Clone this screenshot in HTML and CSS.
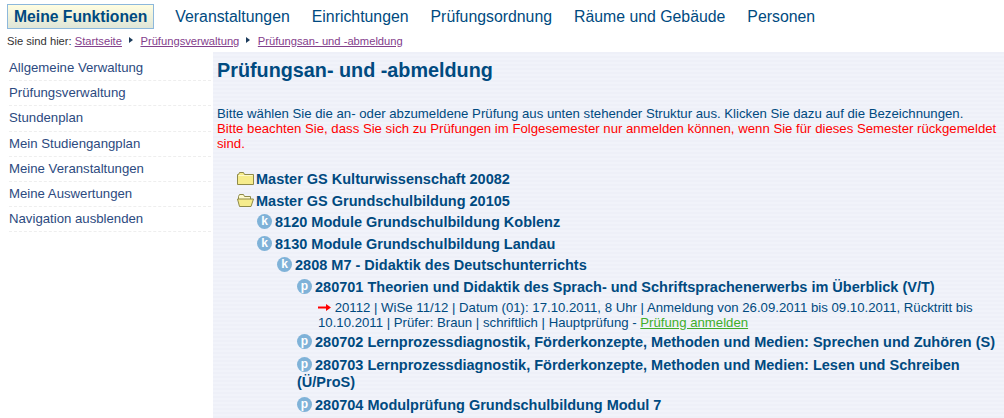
FILE: index.html
```html
<!DOCTYPE html>
<html lang="de">
  <head>
    <meta charset="UTF-8" />
    <title>Prüfungsan- und -abmeldung</title>
    <link rel="stylesheet" href="styles.css">
  </head>
  <body>
    <div class="topnav">
      <a class="topnav-active">Meine Funktionen</a>
      <a>Veranstaltungen</a>
      <a>Einrichtungen</a>
      <a>Prüfungsordnung</a>
      <a>Räume und Gebäude</a>
      <a>Personen</a>
    </div>
    <div class="crumbs">
      <span>Sie sind hier:</span>
      <a>Startseite</a>
      <i class="crumb-arrow"></i>
      <a>Prüfungsverwaltung</a>
      <i class="crumb-arrow"></i>
      <a>Prüfungsan- und -abmeldung</a>
    </div>
    <div class="page">
      <ul class="sidebar">
        <li>Allgemeine Verwaltung</li>
        <li>Prüfungsverwaltung</li>
        <li>Stundenplan</li>
        <li>Mein Studiengangplan</li>
        <li>Meine Veranstaltungen</li>
        <li>Meine Auswertungen</li>
        <li>Navigation ausblenden</li>
      </ul>
      <div class="content">
        <h1>Prüfungsan- und -abmeldung</h1>
        <p class="intro">Bitte wählen Sie die an- oder abzumeldene Prüfung aus unten stehender Struktur aus. Klicken Sie dazu auf die Bezeichnungen.<br>
        <span class="warn">Bitte beachten Sie, dass Sie sich zu Prüfungen im Folgesemester nur anmelden können, wenn Sie für dieses Semester rückgemeldet sind.</span></p>

        <div class="tree">
          <div class="node">
            <svg class="folder" width="17" height="14" viewBox="0 0 17 14"><path d="M.5 3.500h1l1-2h4l1 2h9v10H.5z" fill="#f6ec8c" stroke="#8f8a48"/><path d="M1.500 4.500h14" stroke="#fdf9cc"/></svg>
            Master GS Kulturwissenschaft 20082
          </div>
          <div class="node">
            <svg class="folder" width="17" height="14" viewBox="0 0 17 14"><path d="M1.500 6V3.500l1-2h4l1 2h6V6" fill="#fdf9cc" stroke="#8f8a48"/><path d="M.5 6h16l-2.500 7.500H2.500z" fill="#f6ec8c" stroke="#8f8a48"/></svg>
            Master GS Grundschulbildung 20105
          </div>
          <div class="level">
            <div class="node"><span class="badge">k</span> 8120 Module Grundschulbildung Koblenz</div>
            <div class="node"><span class="badge">k</span> 8130 Module Grundschulbildung Landau</div>
            <div class="level">
              <div class="node"><span class="badge">k</span> 2808 M7 - Didaktik des Deutschunterrichts</div>
              <div class="level">
                <div class="node"><span class="badge">p</span> 280701 Theorien und Didaktik des Sprach- und Schriftsprachenerwerbs im Überblick (V/T)</div>
                <div class="exam">
                  <svg class="arrow" width="13" height="7" viewBox="0 0 13 7"><path d="M0 2.500h8V0l5 3.500-5 3.500V4.500H0z" fill="#f00"/></svg>
                  20112 | WiSe 11/12 | Datum (01): 17.10.2011, 8 Uhr | Anmeldung von 26.09.2011 bis 09.10.2011, Rücktritt bis 10.10.2011 | Prüfer: Braun | schriftlich | Hauptprüfung - <a class="register">Prüfung anmelden</a>
                </div>
                <div class="node node-exam">
                  <span class="badge">p</span> 280702 Lernprozessdiagnostik, Förderkonzepte, Methoden und Medien: Sprechen und Zuhören (S)
                </div>
                <div class="node node-exam">
                  <span class="badge">p</span> 280703 Lernprozessdiagnostik, Förderkonzepte, Methoden und Medien: Lesen und Schreiben (Ü/ProS)
                </div>
                <div class="node node-exam">
                  <span class="badge">p</span> 280704 Modulprüfung Grundschulbildung Modul 7
                </div>
              </div>
            </div>
          </div>
        </div>
      </div>
    </div>
  </body>
</html>
```

FILE: styles.css
```css
* {
  margin: 0;
  padding: 0;
  box-sizing: border-box;
}

html,
body {
  height: 100%;
  overflow: hidden;
}

body {
  background-color: white;
  font-family: "Liberation Sans", Arial, sans-serif;
  color: #004a80;
}

.topnav {
  display: flex;
  align-items: center;
  height: 25px;
  margin-top: 4px;
  padding-left: 7px;
  font-size: 15.84px;
}

.topnav a {
  margin-right: 22px;
}

.topnav .topnav-active {
  height: 25px;
  line-height: 23px;
  padding: 0 6px;
  margin-right: 21px;
  font-size: 15.7px;
  font-weight: bold;
  border: 1px solid #8db8dc;
  background: linear-gradient(#fffde0, #dfe6d8);
}

.crumbs {
  display: flex;
  align-items: center;
  height: 23px;
  padding-left: 7px;
  font-size: 11.2px;
  color: #333;
}

.crumbs a {
  margin-left: 3px;
  color: #84408c;
  text-decoration: underline;
}

.crumb-arrow {
  width: 0;
  height: 0;
  margin: 0 4.500px 2px 7px;
  border-left: 4px solid #1c3c5c;
  border-top: 3px solid transparent;
  border-bottom: 3px solid transparent;
}

.page {
  display: flex;
  height: 366px;
}

.sidebar {
  width: 213px;
  flex-shrink: 0;
  padding: 4px 2px 0 9px;
  list-style-type: none;
  font-size: 13.2px;
  color: #2c4a80;
}

.sidebar li {
  height: 25.2px;
  line-height: 24px;
  border-bottom: 1px dashed #eee;
}

.content {
  flex: 1;
  padding: 5px 4px 0 4px;
  background-color: #eef0f8;
  background-image: repeating-linear-gradient(#eef0f8 0, #eef0f8 2px, #f1f3fa 2px, #f1f3fa 4px);
}

h1 {
  font-size: 19.8px;
  line-height: 26px;
  margin-bottom: 23px;
}

.intro {
  font-size: 13.2px;
  line-height: 15px;
}

.warn {
  color: #f00;
}

.tree {
  margin-top: 18px;
  padding-left: 20px;
}

.node {
  font-size: 14.5px;
  font-weight: bold;
  line-height: 17px;
  padding: 2px 0 2.500px;
}

.node-exam {
  padding: 3px 0;
}

.folder {
  margin-right: -2px;
  vertical-align: -1px;
}

.level {
  padding-left: 20px;
}

.badge {
  display: inline-block;
  width: 15px;
  height: 15px;
  margin-right: -1px;
  border-radius: 50%;
  background-color: #7fb2d8;
  color: white;
  font-size: 12px;
  line-height: 14px;
  text-align: center;
  vertical-align: 2px;
}

.exam {
  padding-left: 21px;
  margin: 2px 0 1px;
  font-size: 13.2px;
  line-height: 15px;
}

.arrow {
  vertical-align: 1px;
}

.register {
  color: #3fae2a;
  text-decoration: underline;
}
```
